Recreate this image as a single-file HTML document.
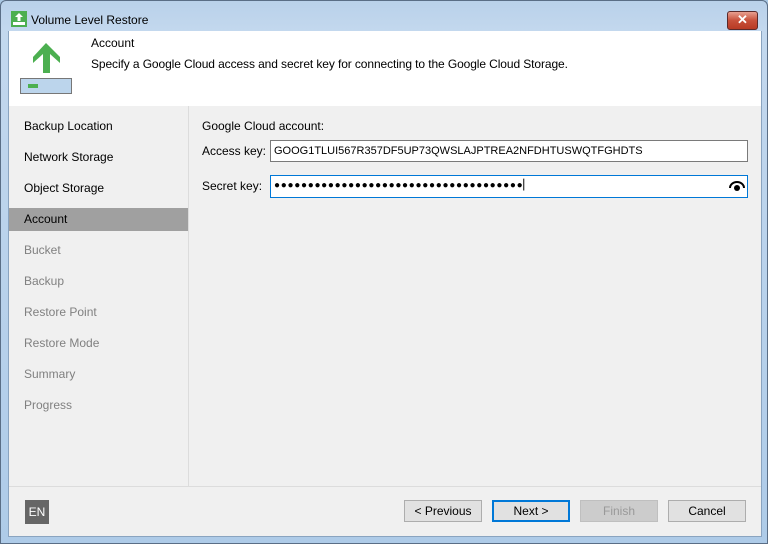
<!DOCTYPE html><html><head><style>
body{margin:0;width:768px;height:544px;background:#aac8e4;font-family:"Liberation Sans",sans-serif;font-size:12px;color:#000;position:relative;overflow:hidden}
.frame{position:absolute;left:0;top:0;width:766px;height:542px;border:1px solid #5a6e86;border-radius:6px 6px 0 0;background:linear-gradient(#b9d1ea,#c3d8ee 30px,#aecbe8)}
.a{position:absolute}
.title{left:30px;top:12px;font-size:12px}
.x{left:726px;top:10px;width:29px;height:17px;border:1px solid #5a2a2a;border-radius:3px;background:linear-gradient(#e8a090,#c7503a 50%,#b83a24);color:#fff;font-weight:bold;text-align:center;line-height:16px;font-size:13px}
.client{left:7px;top:30px;width:752px;height:505px;background:#f0f0f0;border:1px solid #8aa4c0;border-top:none}
.hdr{left:0;top:0;width:752px;height:75px;background:#fff}
.nav{left:0;top:75px;padding-top:5px;width:179px;height:375px;border-right:1px solid #dcdcdc}
.nav div{height:23px;line-height:23px;margin:4px 0 8px;padding-left:15px;color:#000}
.nav .dis{color:#808080}
.nav .sel{background:#a0a0a0}
.inp{background:#fff;border:1px solid #7a7a7a;height:22px;line-height:20px;padding-left:3px;box-sizing:border-box}
.btn{top:469px;width:78px;height:22px;border:1px solid #adadad;background:#e1e1e1;text-align:center;line-height:20px;box-sizing:border-box}
</style></head><body><div class="frame">
<svg class="a" style="left:10px;top:10px" width="16" height="16"><rect width="16" height="16" fill="#4caf50"/><path d="M8 2 L12 6 H9.5 V10 H6.5 V6 H4 Z" fill="#fff"/><rect x="2" y="11" width="12" height="3" fill="#fff"/></svg>
<div class="a title">Volume Level Restore</div>
<div class="a x">✕</div>
<div class="a client">
<div class="a hdr">
<svg class="a" style="left:11px;top:12px" width="53" height="52"><path d="M26 0 L40 14 V20 L30 11 V30 H23 V11 L13 20 V14 Z" fill="#4caf50"/><rect x="0.5" y="35.5" width="51" height="15" fill="#bcd5ec" stroke="#777"/><rect x="8" y="41" width="10" height="4" fill="#4caf50"/></svg>
<div class="a" style="left:82px;top:5px">Account</div>
<div class="a" style="left:82px;top:26px;letter-spacing:-0.1px">Specify a Google Cloud access and secret key for connecting to the Google Cloud Storage.</div>
</div>
<div class="a nav">
<div>Backup Location</div><div>Network Storage</div><div>Object Storage</div><div class="sel">Account</div><div class="dis">Bucket</div><div class="dis">Backup</div><div class="dis">Restore Point</div><div class="dis">Restore Mode</div><div class="dis">Summary</div><div class="dis">Progress</div>
</div>
<div class="a" style="left:0;top:455px;width:752px;border-top:1px solid #dcdcdc"></div>
<div class="a" style="left:193px;top:88px">Google Cloud account:</div>
<div class="a" style="left:193px;top:113px">Access key:</div>
<div class="a inp" style="left:261px;top:109px;width:478px;font-size:11px">GOOG1TLUI567R357DF5UP73QWSLAJPTREA2NFDHTUSWQTFGHDTS</div>
<div class="a" style="left:193px;top:148px">Secret key:</div>
<div class="a inp" style="left:261px;top:144px;width:478px;height:23px;border-color:#0078d7;font-size:10px;letter-spacing:0.7px">●●●●●●●●●●●●●●●●●●●●●●●●●●●●●●●●●●●●●▏</div>
<svg class="a" style="left:719px;top:149px" width="18" height="12"><path d="M2 8 A7 6 0 0 1 16 8" fill="none" stroke="#000" stroke-width="2"/><circle cx="9" cy="8" r="3" fill="#000"/></svg>
<div class="a" style="left:16px;top:469px;width:24px;height:24px;background:#666;color:#fff;text-align:center;line-height:24px">EN</div>
<div class="a btn" style="left:395px">&lt; Previous</div>
<div class="a btn" style="left:483px;border:2px solid #0078d7;line-height:18px">Next &gt;</div>
<div class="a btn" style="left:571px;background:#ccc;border-color:#bfbfbf;color:#999">Finish</div>
<div class="a btn" style="left:659px">Cancel</div>
</div></div></body></html>
